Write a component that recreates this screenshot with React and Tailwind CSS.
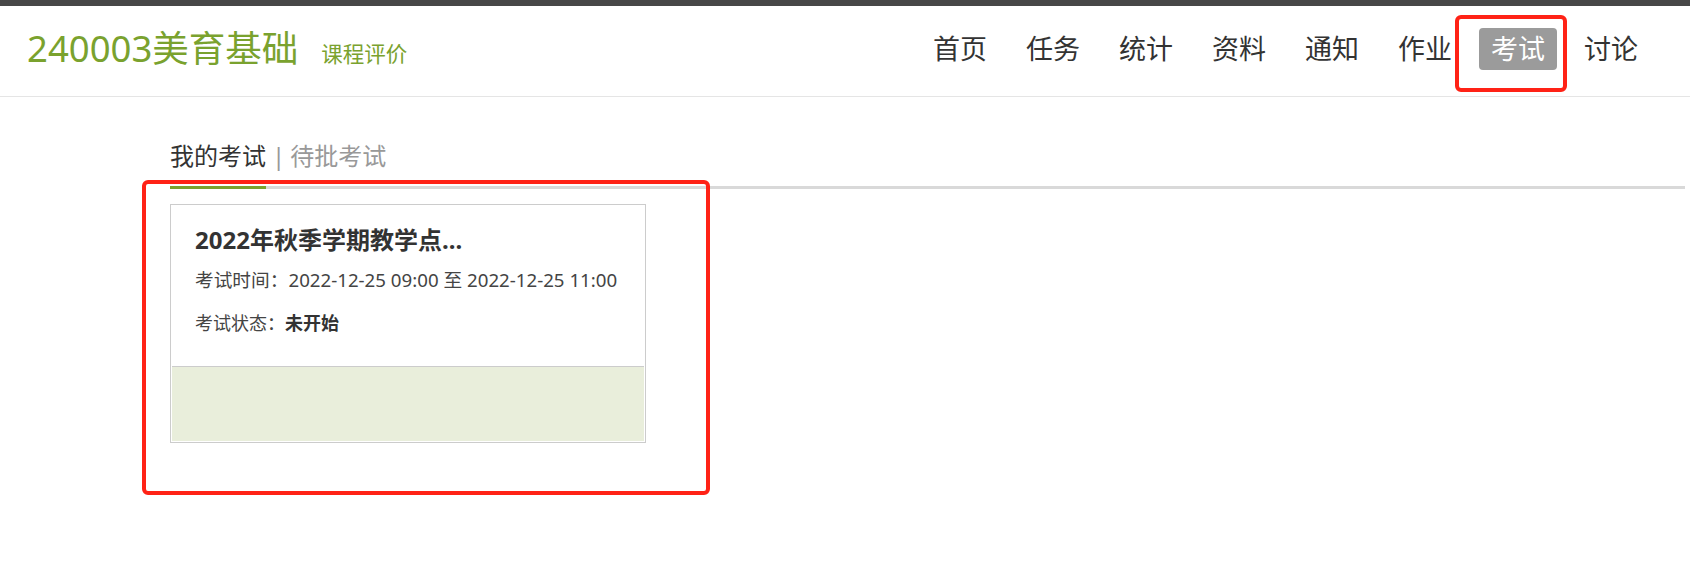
const navItems = ['首页', '任务', '统计', '资料', '通知', '作业', '考试', '讨论'];

const font = { fontFamily: '"Noto Sans", "Noto Sans CJK SC", sans-serif' };

export default function App() {
  return (
    <div className="relative min-h-[579px] bg-white text-[#333]" style={font}>
      <div className="h-[6px] bg-[#474747]" />

      {/* header */}
      <div className="flex h-[91px] justify-between border-b border-[#e5e5e5]">
        <div className="flex items-baseline pl-[27px] pt-[20px]">
          <span className="text-[36.5px] leading-[44px] text-[#7aa22e]">240003美育基础</span>
          <span className="ml-[23px] text-[21.5px] text-[#7aa22e]">课程评价</span>
        </div>
        <div className="flex gap-[15px] pr-[40px] pt-[22px]">
          {navItems.map((item) => (
            <span
              key={item}
              className={`h-[42px] rounded-[4px] px-[12px] text-[27px] leading-[42px] ${
                item === '考试' ? 'bg-[#9b9b9b] text-white' : 'text-[#333]'
              }`}
            >
              {item}
            </span>
          ))}
        </div>
      </div>

      {/* tabs */}
      <div className="ml-[170px] mr-[5px] flex items-end border-b-[3px] border-[#d9d9d9] pt-[43px]">
        <span className="-mb-[3px] border-b-[3px] border-[#7aa22e] pb-[14px] text-[24px] leading-[32px] text-[#333]">
          我的考试
        </span>
        <span className="ml-[6px] mr-[5px] pb-[14px] text-[24px] leading-[32px] text-[#999]">|</span>
        <span className="pb-[14px] text-[24px] leading-[32px] text-[#999]">待批考试</span>
      </div>

      {/* exam card */}
      <div className="ml-[170px] mt-[15px] w-[476px] border border-[#cccccc]">
        <div className="h-[161px] pl-[24px] pt-[19px]">
          <div className="text-[24px] font-bold leading-[32px] text-[#333]">2022年秋季学期教学点...</div>
          <div className="mt-[12px] text-[18.7px] leading-[24px] text-[#444]">
            考试时间：2022-12-25 09:00 至 2022-12-25 11:00
          </div>
          <div className="mt-[19px] text-[18px] leading-[24px] text-[#444]">
            考试状态：<span className="font-bold text-[#333]">未开始</span>
          </div>
        </div>
        <div className="mx-[1px] mb-[1px] h-[75px] border-t border-[#cccccc] bg-[#e9eedb]" />
      </div>

      {/* annotation boxes */}
      <div className="pointer-events-none absolute left-[1455px] top-[15px] h-[77px] w-[112px] rounded-[6px] border-4 border-[#ff2216]" />
      <div className="pointer-events-none absolute left-[142px] top-[180px] h-[315px] w-[568px] rounded-[6px] border-4 border-[#ff2216]" />
    </div>
  );
}
